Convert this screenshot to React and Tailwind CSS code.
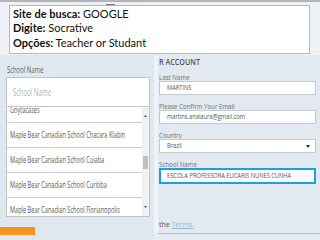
import React from "react";

const items = [
  "Goytacazes",
  "Maple Bear Canadian School Chacara Klabin",
  "Maple Bear Canadian School Cuiaba",
  "Maple Bear Canadian School Curitiba",
  "Maple Bear Canadian School Florianopolis",
];

const Squish = ({ children, className = "" }) => (
  <span className={"block whitespace-nowrap origin-left " + className}>{children}</span>
);

const Field = ({ label, value, select, active }) => (
  <div className="mb-[8px]">
    <div className="h-[7px] leading-[7px] text-[7px] text-[#707070]">
      <Squish className="scale-x-[0.88]">{label}</Squish>
    </div>
    <div
      className={
        active
          ? "h-[16px] border-2 border-[#1ba1df] bg-white flex items-center pl-[6px]"
          : "h-[14px] border border-[#c9c9c9] bg-white flex items-center pl-[7px] relative"
      }
    >
      <Squish className="text-[6.5px] leading-[8px] text-[#555] scale-x-[0.88]">{value}</Squish>
      {select && (
        <svg className="absolute right-[5px] top-[5px]" width="4" height="3" viewBox="0 0 4 3">
          <path d="M0 0h4L2 3z" fill="#333" />
        </svg>
      )}
    </div>
  </div>
);

export default function App() {
  return (
    <div
      className="w-[320px] h-[240px] overflow-hidden bg-[#e4ebf1] relative"
      style={{ fontFamily: "'Open Sans', 'DejaVu Sans', sans-serif" }}
    >
      {/* slide note */}
      <div className="h-[55px] bg-[#eef2f6] border-t-2 border-[#b4b4b4] relative">
        <div className="absolute left-[106px] top-[2px] w-[9px] h-[2px] bg-[#6f7a86]" />
        <div
          className="absolute left-[9px] top-[3px] w-[301px] h-[49px] bg-white border border-[#86c8de] pl-[3px] pt-[1px] text-[11px] leading-[14.3px] text-[#111]"
          style={{ fontFamily: "Lato, 'Liberation Sans', sans-serif" }}
        >
          <div><b>Site de busca:</b> GOOGLE</div>
          <div><b>Digite:</b> Socrative</div>
          <div><b>Opções:</b> Teacher or Studant</div>
        </div>
      </div>

      <div className="flex">
        {/* left panel */}
        <div className="w-[154px] h-[185px] bg-[#dfe8f0] pt-[10px]">
          <div className="pl-[7px] h-[10px] leading-[10px] text-[9.5px] text-[#666]">
            <Squish className="scale-x-[0.62]">School Name</Squish>
          </div>
          <div className="ml-[6px] mt-[2px] w-[144px] h-[30px] bg-white border border-[#c4c4c4] flex items-center pl-[6px]">
            <Squish className="text-[10px] text-[#b4b4b4] scale-x-[0.62]">School Name</Squish>
          </div>
          <div className="ml-[6px] w-[144px] h-[110px] bg-white border-x border-b border-[#c4c4c4] flex">
            <div className="flex-1 overflow-hidden">
              <div className="mt-[-9px]">
                {items.map((t) => (
                  <div key={t} className="h-[25px] border-b border-[#cfcfcf] flex items-center pl-[3px]">
                    <Squish className="text-[8.5px] text-[#5a5a5a] scale-x-[0.66]">{t}</Squish>
                  </div>
                ))}
              </div>
            </div>
            <div className="w-[7px] bg-[#f1f1f1] flex flex-col">
              <div className="h-[18px] flex items-center justify-center">
                <svg width="3" height="2" viewBox="0 0 3 2"><path d="M0 2h3L1.5 0z" fill="#555" /></svg>
              </div>
              <div className="flex-1 pt-[31px] px-[1px]">
                <div className="h-[13px] bg-[#c1c1c1]" />
              </div>
              <div className="h-[18px] flex items-center justify-center">
                <svg width="3" height="2" viewBox="0 0 3 2"><path d="M0 0h3L1.5 2z" fill="#555" /></svg>
              </div>
            </div>
          </div>
          <div className="mt-[10px] w-[35px] h-[8px] bg-[#f7931e]" />
        </div>

        {/* divider */}
        <div className="w-[4px] h-[178px] bg-[#eef3f7]" />

        {/* right panel */}
        <div className="flex-1 h-[179px] bg-[#e2e9f0] border-b border-[#bdbdbd] pl-[1px] pr-[4px] pt-[3px]">
          <div className="h-[8px] leading-[8px] text-[8px] text-[#555] font-semibold">
            <Squish className="scale-x-[0.9]">R ACCOUNT</Squish>
          </div>
          <div className="mt-[8px]">
            <Field label="Last Name" value="MARTINS" />
            <Field label="Please Confirm Your Email" value="martins.analaura@gmail.com" />
            <Field label="Country" value="Brazil" select />
            <Field label="School Name" value="ESCOLA PROFESSORA EUCARIS NUNES CUNHA" active />
          </div>
          <div className="mt-[37px] h-[8px] leading-[8px] text-[7px] text-[#555]">
            the <span className="text-[#8fb9dc] underline">Terms.</span>
          </div>
        </div>
      </div>
    </div>
  );
}
